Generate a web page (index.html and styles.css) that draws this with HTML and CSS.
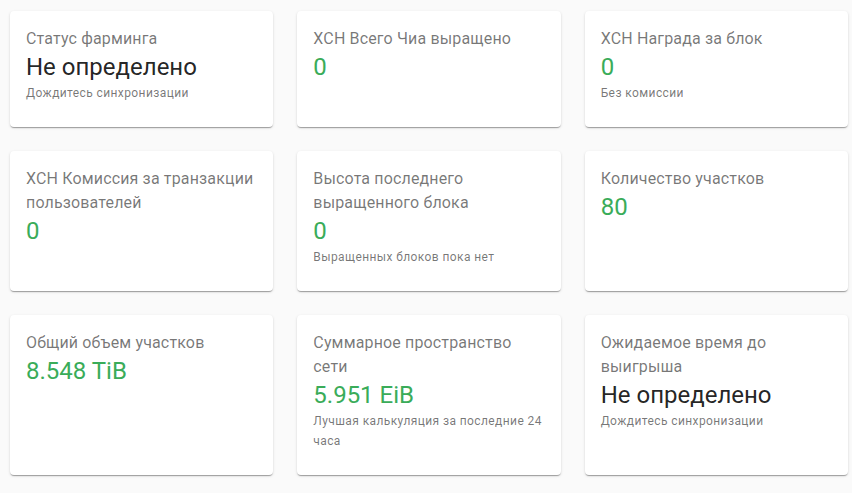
FILE: index.html
```html
<!DOCTYPE html>
<html lang="ru">
<head>
  <meta charset="UTF-8">
  <meta name="viewport" content="width=device-width, initial-scale=1.0">
  <title>Фарминг</title>
  <link rel="stylesheet" href="styles.css">
</head>
<body>
  <div class="cards">
    <!-- Row 1 -->
    <div class="card">
      <div class="card-title">Статус фарминга</div>
      <div class="card-value dark">Не определено</div>
      <div class="card-caption">Дождитесь синхронизации</div>
    </div>
    <div class="card">
      <div class="card-title">XCH Всего Чиа выращено</div>
      <div class="card-value">0</div>
    </div>
    <div class="card">
      <div class="card-title">XCH Награда за блок</div>
      <div class="card-value">0</div>
      <div class="card-caption">Без комиссии</div>
    </div>

    <!-- Row 2 -->
    <div class="card">
      <div class="card-title">XCH Комиссия за транзакции пользователей</div>
      <div class="card-value">0</div>
    </div>
    <div class="card">
      <div class="card-title">Высота последнего выращенного блока</div>
      <div class="card-value">0</div>
      <div class="card-caption">Выращенных блоков пока нет</div>
    </div>
    <div class="card">
      <div class="card-title">Количество участков</div>
      <div class="card-value">80</div>
    </div>

    <!-- Row 3 -->
    <div class="card">
      <div class="card-title">Общий объем участков</div>
      <div class="card-value">8.548 TiB</div>
    </div>
    <div class="card">
      <div class="card-title">Суммарное пространство сети</div>
      <div class="card-value">5.951 EiB</div>
      <div class="card-caption">Лучшая калькуляция за последние 24 часа</div>
    </div>
    <div class="card">
      <div class="card-title">Ожидаемое время до выигрыша</div>
      <div class="card-value dark">Не определено</div>
      <div class="card-caption">Дождитесь синхронизации</div>
    </div>
  </div>
</body>
</html>
```

FILE: styles.css
```css
/* Page */
body {
  margin: 0;
  background: #fafafa;
  font-family: Roboto, 'Liberation Sans', sans-serif;
  color: rgba(0, 0, 0, 0.87);
}

/* Card grid */
.cards {
  display: grid;
  grid-template-columns: repeat(3, 1fr);
  gap: 24px;
  padding: 11px 4px 16px 10px;
}

/* Single card */
.card {
  background: #fff;
  border-radius: 4px;
  box-shadow: 0 2px 1px -1px rgba(0, 0, 0, 0.2),
              0 1px 1px 0 rgba(0, 0, 0, 0.14),
              0 1px 3px 0 rgba(0, 0, 0, 0.12);
  padding: 16px 16px 24px;
}

.card-title {
  font-size: 16px;
  line-height: 24px;
  color: rgba(0, 0, 0, 0.54);
  letter-spacing: 0.15px;
}

.card-value {
  font-size: 24px;
  line-height: 32px;
  color: #3aac59;
}

.card-value.dark {
  color: rgba(0, 0, 0, 0.87);
}

.card-caption {
  font-size: 12px;
  line-height: 20px;
  color: rgba(0, 0, 0, 0.54);
  letter-spacing: 0.4px;
}
```
